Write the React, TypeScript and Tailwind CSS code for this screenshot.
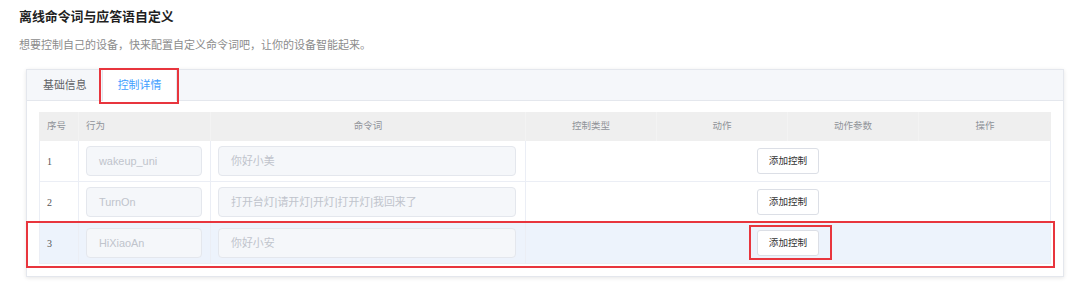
import React from "react";

const rows = [
  { n: "1", action: "wakeup_uni", cmd: "你好小美", hl: false },
  { n: "2", action: "TurnOn", cmd: "打开台灯|请开灯|开灯|打开灯|我回来了", hl: false },
  { n: "3", action: "HiXiaoAn", cmd: "你好小安", hl: true },
];

const headers = ["控制类型", "动作", "动作参数", "操作"];

export default function App() {
  return (
    <div className="w-[1080px] h-[288px] bg-white pl-[19px] pt-[8px] font-['Liberation_Sans','Noto_Sans_CJK_SC',sans-serif] overflow-hidden">
      <h1 className="text-[12.9px] leading-[18px] font-bold text-[#1f1f1f]">离线命令词与应答语自定义</h1>
      <p className="mt-[11px] text-[11px] leading-[16px] text-[#8c8c8c]">
        想要控制自己的设备，快来配置自定义命令词吧，让你的设备智能起来。
      </p>
      <div className="relative mt-[16px] ml-[7px] w-[1038px] border border-[#e4e7ed] bg-white shadow-[0_1px_4px_rgba(0,0,0,0.1)]">
        {/* tabs */}
        <div className="flex h-[31px] bg-[#f5f7fa] border-b border-[#e4e7ed]">
          <div className="flex items-center w-[75px] pl-[16px] text-[10.9px] text-[#606266]">基础信息</div>
          <div className="flex items-center justify-center w-[75px] h-[31px] bg-white border-x border-[#e4e7ed] text-[10.9px] text-[#409eff]">
            控制详情
          </div>
        </div>
        {/* table */}
        <div className="px-[12px] pt-[11px] pb-[12px]">
          <div className="grid grid-cols-[40px_132px_315px_131px_131px_131px_132px] h-[29px] bg-[#efefef] text-[9.5px] text-[#909399]">
            <div className="flex items-center pl-[8px] border-r border-[#f3f3f3]">序号</div>
            <div className="flex items-center pl-[7px] border-r border-[#f3f3f3]">行为</div>
            <div className="flex items-center justify-center border-r border-[#f3f3f3]">命令词</div>
            {headers.map((h, i) => (
              <div key={h} className={`flex items-center justify-center ${i < 3 ? "border-r border-[#f3f3f3]" : ""}`}>
                {h}
              </div>
            ))}
          </div>
          {rows.map((r) => (
            <div
              key={r.n}
              className={`grid grid-cols-[40px_132px_315px_525px] h-[41px] border-b border-[#ebeef5] ${r.hl ? "bg-[#edf3fc]" : "bg-white"}`}
            >
              <div className="flex items-center pl-[7px] border-x border-[#ebeef5] font-['Liberation_Serif',serif] text-[10px] text-[#555]">
                {r.n}
              </div>
              <div className="flex items-center pl-[7px] border-r border-[#ebeef5]">
                <div className="flex items-center w-[116px] h-[30px] pl-[12px] rounded-[4px] bg-[#f5f7fa] border border-[#e4e7ed] text-[10.9px] text-[#c0c4cc]">
                  {r.action}
                </div>
              </div>
              <div className="flex items-center pl-[7px] border-r border-[#ebeef5]">
                <div className="flex items-center w-[298px] h-[30px] pl-[12px] rounded-[4px] bg-[#f5f7fa] border border-[#e4e7ed] text-[10.9px] text-[#c0c4cc]">
                  {r.cmd}
                </div>
              </div>
              <div className="flex items-center justify-center border-r border-[#ebeef5]">
                <div className="relative">
                  <div className="flex items-center justify-center w-[62px] h-[26px] rounded-[3px] bg-white border border-[#dcdfe6] text-[9.6px] text-[#333]">
                    添加控制
                  </div>
                  {r.hl && (
                    <div className="absolute left-[-8px] top-[-5px] w-[83px] h-[35px] border-2 border-[#e8353d]" />
                  )}
                </div>
              </div>
            </div>
          ))}
        </div>
        {/* red highlight boxes */}
        <div className="absolute left-[72px] top-[-2px] w-[80px] h-[36px] border-2 border-[#e8353d]" />
        <div className="absolute left-[-1px] top-[151px] w-[1029px] h-[47px] border-2 border-[#e8353d]" />
      </div>
    </div>
  );
}
